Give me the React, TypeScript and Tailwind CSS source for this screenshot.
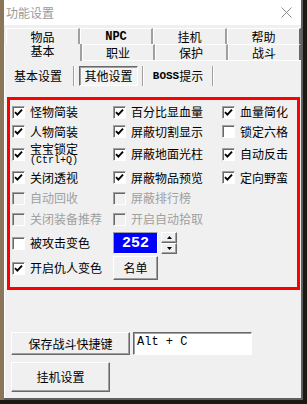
import React from 'react';

const cjk = "font-['Noto_Sans_CJK_SC','Liberation_Sans',sans-serif]";
const mono = "font-['Liberation_Mono','Noto_Sans_CJK_SC',monospace]";

const raised =
  'border border-t-white border-l-white border-r-[#696969] border-b-[#696969] shadow-[inset_-1px_-1px_0_#a0a0a0] bg-[#f0f0f0]';

interface CheckProps {
  on?: boolean;
  off?: boolean;
}

const Check: React.FC<CheckProps> = ({ on, off }) => (
  <span
    className={`w-[13px] h-[13px] shrink-0 flex items-center justify-center border border-t-[#a0a0a0] border-l-[#a0a0a0] border-r-white border-b-white shadow-[inset_1px_1px_0_#696969] ${
      off ? 'bg-[#f0f0f0]' : 'bg-white'
    }`}
  >
    {on && (
      <svg width="9" height="9" viewBox="0 0 9 9">
        <path d="M1 4.2 L3.4 6.6 L8 1.6" stroke="#000" strokeWidth="1.9" fill="none" />
      </svg>
    )}
  </span>
);

const Item: React.FC<{ label: React.ReactNode; on?: boolean; off?: boolean }> = ({ label, on, off }) => (
  <div className="flex items-center gap-[5px]">
    <Check on={on} off={off} />
    <span className={`text-[12px] leading-[14px] whitespace-nowrap ${off ? 'text-[#a0a0a0]' : 'text-black'}`}>{label}</span>
  </div>
);

const Tab: React.FC<{ label: string; w: string; latin?: boolean; last?: boolean }> = ({ label, w, latin, last }) => (
  <div
    className={`${w} h-full flex items-center justify-center border-t border-l border-t-white border-l-white border-r-2 ${
      last ? 'border-r-[#696969]' : 'border-r-[#a0a0a0]'
    } bg-[#f0f0f0] text-[12px] leading-none ${latin ? `${mono} font-bold` : ''}`}
  >
    {label}
  </div>
);

export default function App() {
  return (
    <div className={`w-[307px] h-[404px] bg-[#1c1812] flex ${cjk}`}>
      <div className="w-[4px] h-[400px] bg-[#8a7558]" />
      <div className="w-[299px] h-[400px] flex flex-col bg-[#f0f0f0] border-r-2 border-b-2 border-r-[#5f5f5f] border-b-[#5f5f5f]">
        {/* title bar */}
        <div className="h-[25px] bg-white flex items-center justify-between pl-[2px] pr-[9px]">
          <span className="text-[12px] text-[#9a9a9a] leading-none">功能设置</span>
          <svg width="11" height="11" viewBox="0 0 11 11">
            <path d="M0.5 0.5 L10.5 10.5 M10.5 0.5 L0.5 10.5" stroke="#8a8a8a" strokeWidth="1" />
          </svg>
        </div>

        {/* tabs */}
        <div className="mt-[3px] h-[16px] flex pl-[2px]">
          <Tab label="物品" w="w-[74px]" />
          <Tab label="NPC" w="w-[73px]" latin />
          <Tab label="挂机" w="w-[74px]" />
          <Tab label="帮助" w="w-[74px]" last />
        </div>
        <div className="h-[16px] flex">
          <div className="w-[78px] h-[17px] flex items-start justify-center pt-[1px] border-l border-l-white border-r-2 border-r-[#a0a0a0] bg-[#f0f0f0] text-[12px] leading-none z-10">
            基本
          </div>
          <Tab label="职业" w="w-[73px]" />
          <Tab label="保护" w="w-[73px]" />
          <Tab label="战斗" w="w-[73px]" last />
        </div>

        {/* content */}
        <div className="flex-1 flex flex-col border-l border-l-white border-t border-t-white">
          {/* sub tabs */}
          <div className="mt-[5px] h-[20px] flex items-center text-[12px] leading-none">
            <div className="w-[66px] text-center">基本设置</div>
            <div className="ml-[2px] w-[2px] h-[20px] border-l border-l-[#a0a0a0] border-r border-r-white" />
            <div className="ml-[4px] w-[59px] h-[20px] flex items-center justify-center border border-t-[#696969] border-l-[#696969] border-r-white border-b-white bg-[#f4f4f4] shadow-[inset_1px_1px_0_#a0a0a0]">
              其他设置
            </div>
            <div className="ml-[4px] w-[2px] h-[20px] border-l border-l-[#a0a0a0] border-r border-r-white" />
            <div className="w-[68px] flex items-center justify-center">
              <span className={`${mono} text-[11px] font-bold`}>BOSS</span>
              <span>提示</span>
            </div>
            <div className="w-[2px] h-[20px] border-l border-l-[#a0a0a0] border-r border-r-white" />
          </div>

          {/* red box */}
          <div className="mt-[11px] ml-[2px] w-[293px] h-[193px] border-[3px] border-[#ff0000] pl-[2px] pt-[2px] flex flex-col">
            <div className="h-[20px] grid grid-cols-[101px_109px_1fr] items-center">
              <Item label="怪物简装" on />
              <Item label="百分比显血量" on />
              <Item label="血量简化" on />
            </div>
            <div className="h-[19px] grid grid-cols-[101px_109px_1fr] items-center">
              <Item label="人物简装" on />
              <Item label="屏蔽切割显示" on />
              <Item label="锁定六格" />
            </div>
            <div className="h-[26px] grid grid-cols-[101px_109px_1fr] items-center">
              <div className="flex items-center gap-[5px]">
                <Check on />
                <div className="flex flex-col">
                  <span className="block h-[13px] text-[12px] leading-[12px]">宝宝锁定</span>
                  <span className={`block h-[9px] ${mono} text-[10px] leading-[9px]`}>(Ctrl+Q)</span>
                </div>
              </div>
              <Item label="屏蔽地面光柱" on />
              <Item label="自动反击" on />
            </div>
            <div className="h-[21px] grid grid-cols-[101px_109px_1fr] items-center">
              <Item label="关闭透视" on />
              <Item label="屏蔽物品预览" on />
              <Item label="定向野蛮" on />
            </div>
            <div className="h-[20px] grid grid-cols-[101px_109px_1fr] items-center">
              <Item label="自动回收" off />
              <Item label="屏蔽排行榜" off />
            </div>
            <div className="h-[22px] grid grid-cols-[101px_109px_1fr] items-center">
              <Item label="关闭装备推荐" off />
              <Item label="开启自动拾取" off />
            </div>
            <div className="h-[26px] grid grid-cols-[101px_109px_1fr] items-center">
              <Item label="被攻击变色" />
              <div className="flex items-center">
                <div className="w-[45px] h-[22px] flex items-center justify-center bg-[#0000ff] border border-t-[#a0a0a0] border-l-[#a0a0a0] border-r-white border-b-white">
                  <span className={`${mono} text-white font-bold text-[15px] leading-none`}>252</span>
                </div>
                <div className="ml-[3px] w-[16px] h-[22px] flex flex-col">
                  <div className={`h-[11px] flex items-center justify-center ${raised}`}>
                    <svg width="5" height="3" viewBox="0 0 5 3">
                      <path d="M2.5 0 L5 3 L0 3 Z" fill="#000" />
                    </svg>
                  </div>
                  <div className={`h-[11px] flex items-center justify-center ${raised}`}>
                    <svg width="5" height="3" viewBox="0 0 5 3">
                      <path d="M0 0 L5 0 L2.5 3 Z" fill="#000" />
                    </svg>
                  </div>
                </div>
              </div>
            </div>
            <div className="h-[24px] grid grid-cols-[101px_109px_1fr] items-center">
              <Item label="开启仇人变色" on />
              <div className={`w-[45px] h-[24px] flex items-center justify-center text-[12px] ${raised}`}>名单</div>
            </div>
          </div>

          {/* bottom */}
          <div className="mt-[42px] ml-[6px] flex items-center gap-[3px]">
            <div className={`w-[119px] h-[23px] flex items-center justify-center text-[12px] ${raised}`}>保存战斗快捷键</div>
            <div className={`w-[119px] h-[23px] flex items-start bg-white border border-t-[#696969] border-l-[#696969] border-r-white border-b-white shadow-[inset_1px_1px_0_#a0a0a0] pl-[3px] pt-[3px] ${mono} text-[12px] leading-none`}>
              Alt + C
            </div>
          </div>
          <div className={`mt-[7px] ml-[6px] w-[99px] h-[30px] flex items-center justify-center text-[12px] ${raised}`}>
            挂机设置
          </div>
        </div>
      </div>
    </div>
  );
}
